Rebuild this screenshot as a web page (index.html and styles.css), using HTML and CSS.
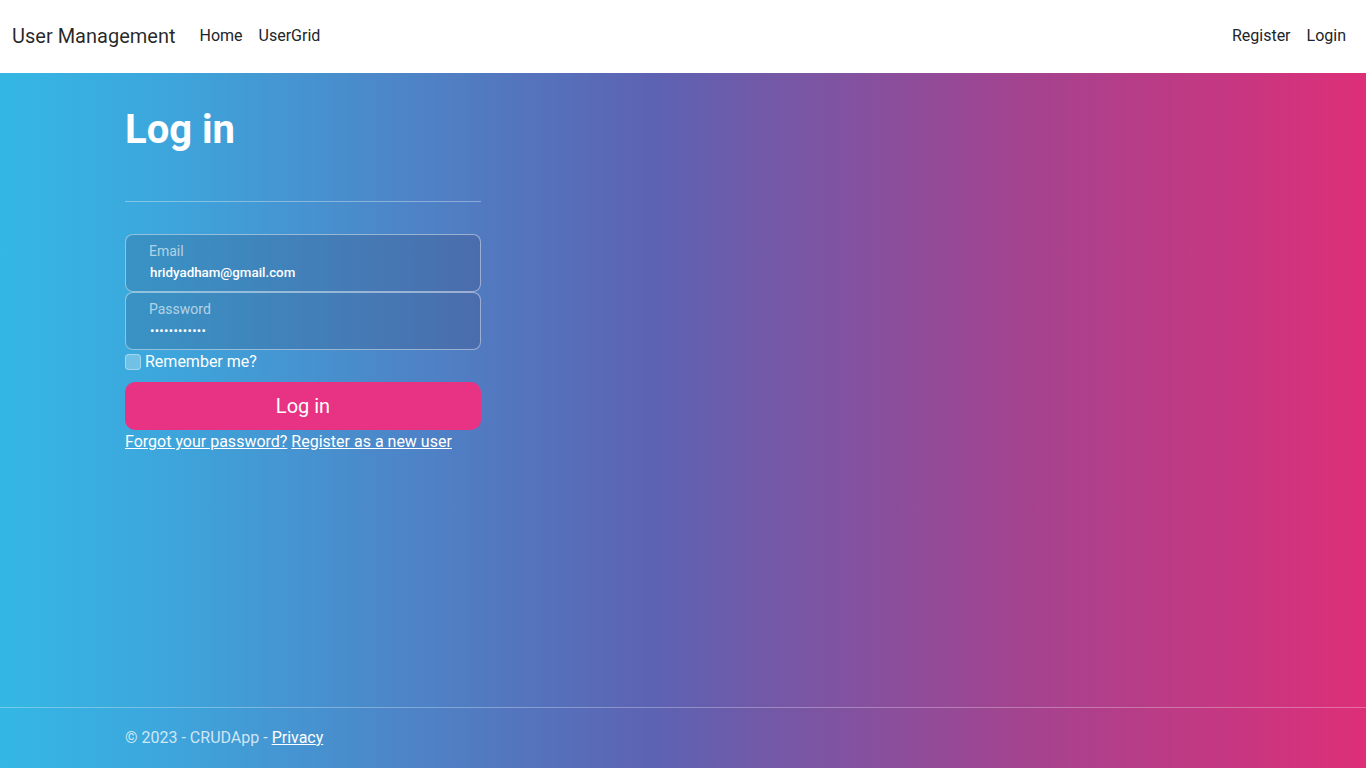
FILE: index.html
```html
<!DOCTYPE html>
<html lang="en">
<head>
<meta charset="utf-8">
<title>Log in - User Management</title>
<link rel="stylesheet" href="styles.css">
</head>
<body>
<header class="navbar">
  <div class="nav-left">
    <a class="brand" href="#">User Management</a>
    <a class="nav-link" href="#">Home</a>
    <a class="nav-link" href="#">UserGrid</a>
  </div>
  <div class="nav-right">
    <a class="nav-link" href="#">Register</a>
    <a class="nav-link" href="#">Login</a>
  </div>
</header>
<div class="page">
  <main class="container">
    <h1 class="title">Log in</h1>
    <div class="col">
      <hr class="rule">
      <form class="form">
        <div class="floating">
          <label class="flabel">Email</label>
          <input class="finput" type="text" value="hridyadham@gmail.com">
        </div>
        <div class="floating">
          <label class="flabel">Password</label>
          <input class="finput pw" type="password" value="hridyadham12">
        </div>
        <label class="check"><span class="box"></span>Remember me?</label>
        <button class="btn" type="button">Log in</button>
        <div class="links">
          <a href="#">Forgot your password?</a> <a href="#">Register as a new user</a>
        </div>
      </form>
    </div>
  </main>
  <footer class="footer">
    <div class="container foot-inner">© 2023 - CRUDApp - <a href="#">Privacy</a></div>
  </footer>
</div>
</body>
</html>
```

FILE: styles.css
```css
* { box-sizing: border-box; }
html, body { margin: 0; padding: 0; height: 100%; }
body {
  font-family: Roboto, "Liberation Sans", sans-serif;
  font-size: 16px;
  color: #fff;
  display: flex;
  flex-direction: column;
  min-height: 768px;
}
a { color: inherit; }
.navbar {
  height: 73px;
  flex: none;
  background: #fff;
  display: flex;
  align-items: center;
  justify-content: space-between;
  padding: 0 12px 2px;
}
.nav-left, .nav-right { display: flex; align-items: center; }
.brand {
  font-size: 20px;
  color: rgba(0,0,0,.85);
  text-decoration: none;
  margin-right: 16px;
}
.nav-link {
  color: #212529;
  text-decoration: none;
  padding: 8px;
  font-size: 16px;
}
.page {
  flex: 1;
  display: flex;
  flex-direction: column;
  background: linear-gradient(to right, #34b7e4 0%, #3da6dc 12%, #5d62b2 48%, #a4438f 75%, #dd2f78 100%);
}
.container {
  width: 1140px;
  margin: 0 auto;
  padding: 0 12px;
}
main.container { flex: 1; }
.title {
  font-size: 40px;
  font-weight: 700;
  line-height: 1.2;
  margin: 0;
  padding-top: 33px;
}
.col { width: 356px; }
.rule {
  margin: 47px 0 32px;
  border: 0;
  border-top: 1px solid rgba(255,255,255,.35);
}
.form { display: flex; flex-direction: column; }
.floating {
  height: 58px;
  border: 1px solid rgba(255,255,255,.45);
  border-radius: 8px;
  background: rgba(50,55,95,.2);
  padding: 7px 23px 0;
  display: flex;
  flex-direction: column;
}
.flabel {
  font-size: 14px;
  color: rgba(255,255,255,.62);
  line-height: 18px;
}
.finput {
  border: 0;
  background: transparent;
  color: #fff;
  font-family: Roboto, "Liberation Sans", sans-serif;
  font-size: 13.33px;
  font-weight: 500;
  padding: 0 0 0 1px;
  margin-top: 2px;
  height: 20px;
  outline: none;
}
.pw { font-size: 13px; letter-spacing: 0.3px; font-weight: 400; }
.check {
  display: flex;
  align-items: center;
  margin-top: 0;
  font-size: 16px;
  line-height: 24px;
  height: 24px;
}
.box {
  width: 16px; height: 16px;
  border-radius: 4px;
  background: rgba(255,255,255,.28);
  border: 1px solid rgba(255,255,255,.35);
  margin-right: 4px;
}
.btn {
  margin-top: 8px;
  height: 48px;
  border: 0;
  border-radius: 10px;
  background: #e83283;
  color: #fff;
  font-family: Roboto, "Liberation Sans", sans-serif;
  font-size: 20px;
}
.links { margin-top: 0; line-height: 24px; font-size: 16px; }
.links a { color: #fff; }
.footer {
  flex: none;
  height: 61px;
  border-top: 1px solid rgba(255,255,255,.3);
}
.foot-inner {
  padding-top: 1px;
  line-height: 58px;
  color: rgba(255,255,255,.75);
  font-size: 16px;
}
.foot-inner a { color: #fff; }
```
